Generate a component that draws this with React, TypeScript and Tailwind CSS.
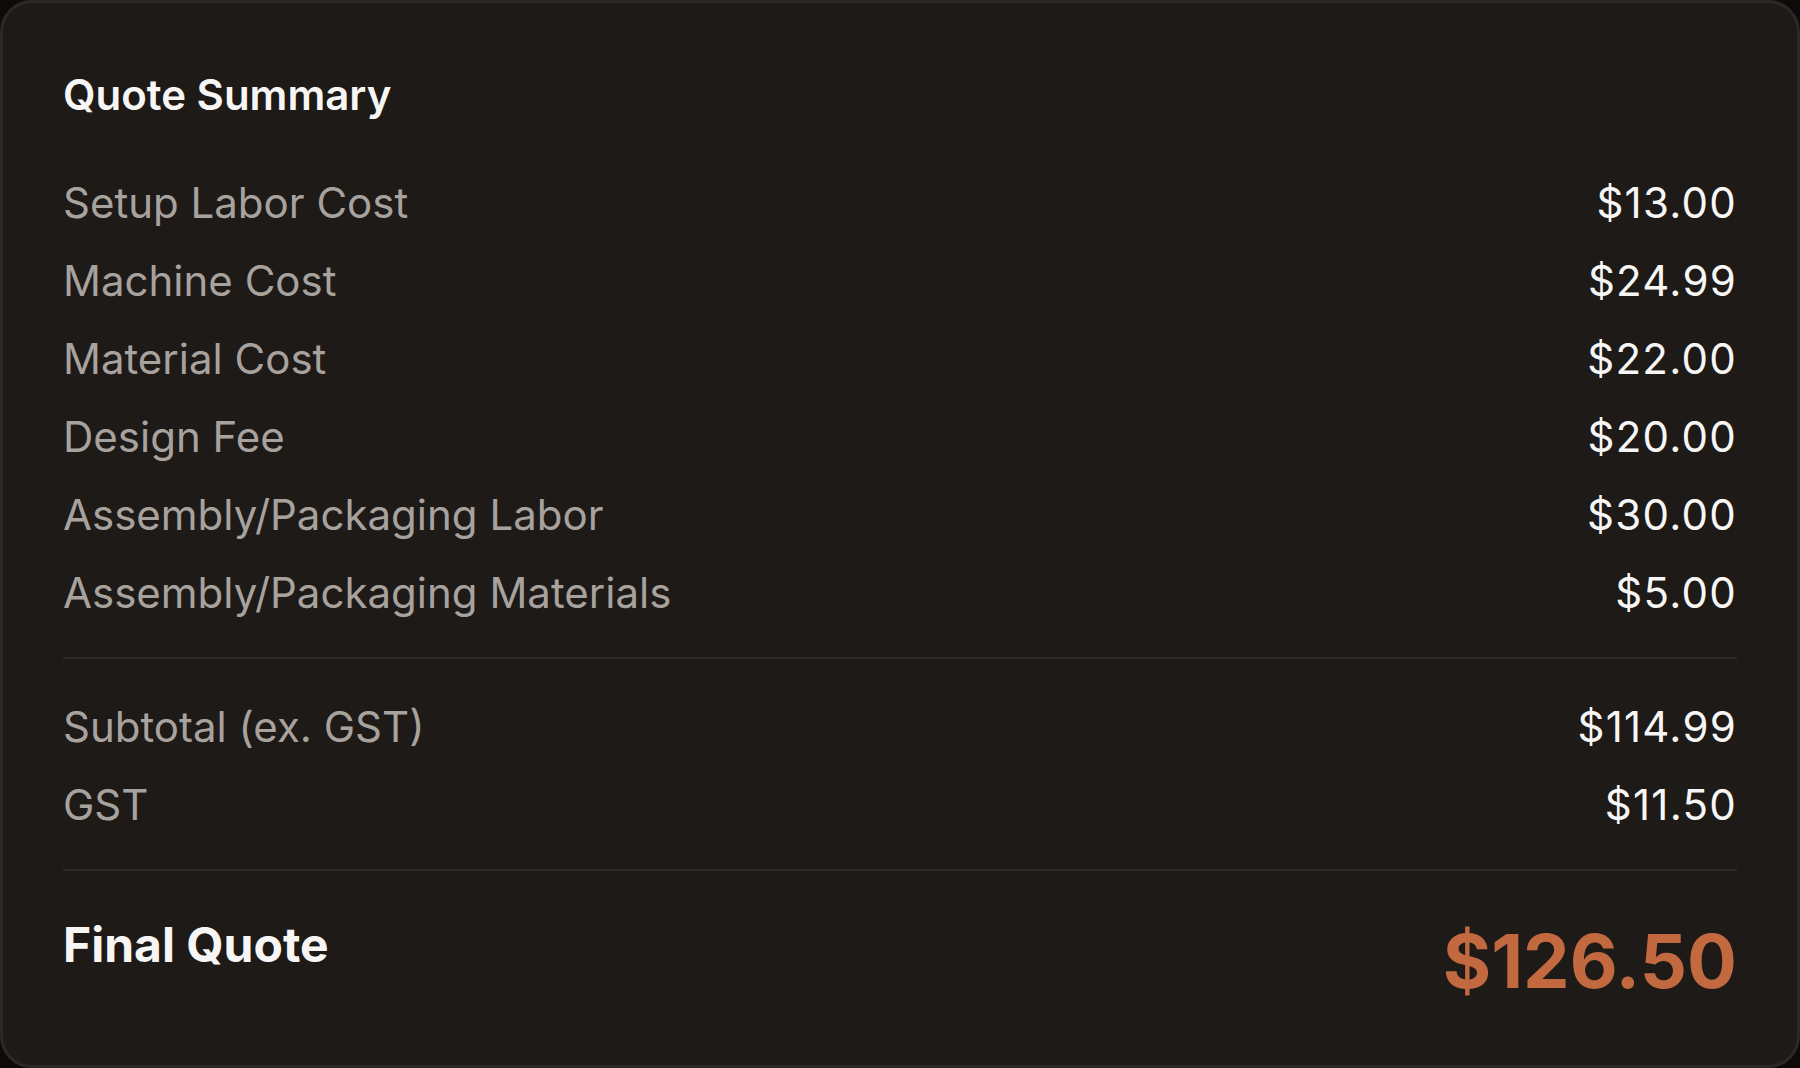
import React from "react";

const items: [string, string][] = [
  ["Setup Labor Cost", "$13.00"],
  ["Machine Cost", "$24.99"],
  ["Material Cost", "$22.00"],
  ["Design Fee", "$20.00"],
  ["Assembly/Packaging Labor", "$30.00"],
  ["Assembly/Packaging Materials", "$5.00"],
];

const totals: [string, string][] = [
  ["Subtotal (ex. GST)", "$114.99"],
  ["GST", "$11.50"],
];

function Row({ label, value }: { label: string; value: string }) {
  return (
    <div className="flex h-[78px] items-center justify-between">
      <span className="text-[42px] leading-none text-[#a8a29e]">{label}</span>
      <span className="text-[42px] leading-none tracking-[0.03em] text-[#f7f6f4]">{value}</span>
    </div>
  );
}

export default function App() {
  return (
    <div className="h-[1068px] w-full bg-[#0c0b0a]" style={{ fontFamily: "Inter, 'Noto Sans', sans-serif" }}>
      <div className="flex h-full w-full flex-col rounded-[32px] border-[3px] border-[#2b2928] bg-[#1d1a18] px-[60px] pt-[67px]">
        <h2 className="h-[94px] text-[42px] font-semibold leading-[50px] text-[#f7f6f4]">Quote Summary</h2>
        <div className="flex flex-col">
          {items.map(([l, v]) => (
            <Row key={l} label={l} value={v} />
          ))}
        </div>
        <div className="mt-[25px] h-[2px] w-full bg-[#2c2a29]" />
        <div className="mt-[29px] flex flex-col">
          {totals.map(([l, v]) => (
            <Row key={l} label={l} value={v} />
          ))}
        </div>
        <div className="mt-[25px] h-[2px] w-full bg-[#2c2a29]" />
        <div className="mt-[44px] flex items-start justify-between">
          <span className="text-[48px] font-bold leading-[60px] text-[#f7f6f4]">Final Quote</span>
          <span className="mt-[4px] text-[74px] font-bold leading-[84px] text-[#c2693f]">$126.50</span>
        </div>
      </div>
    </div>
  );
}
